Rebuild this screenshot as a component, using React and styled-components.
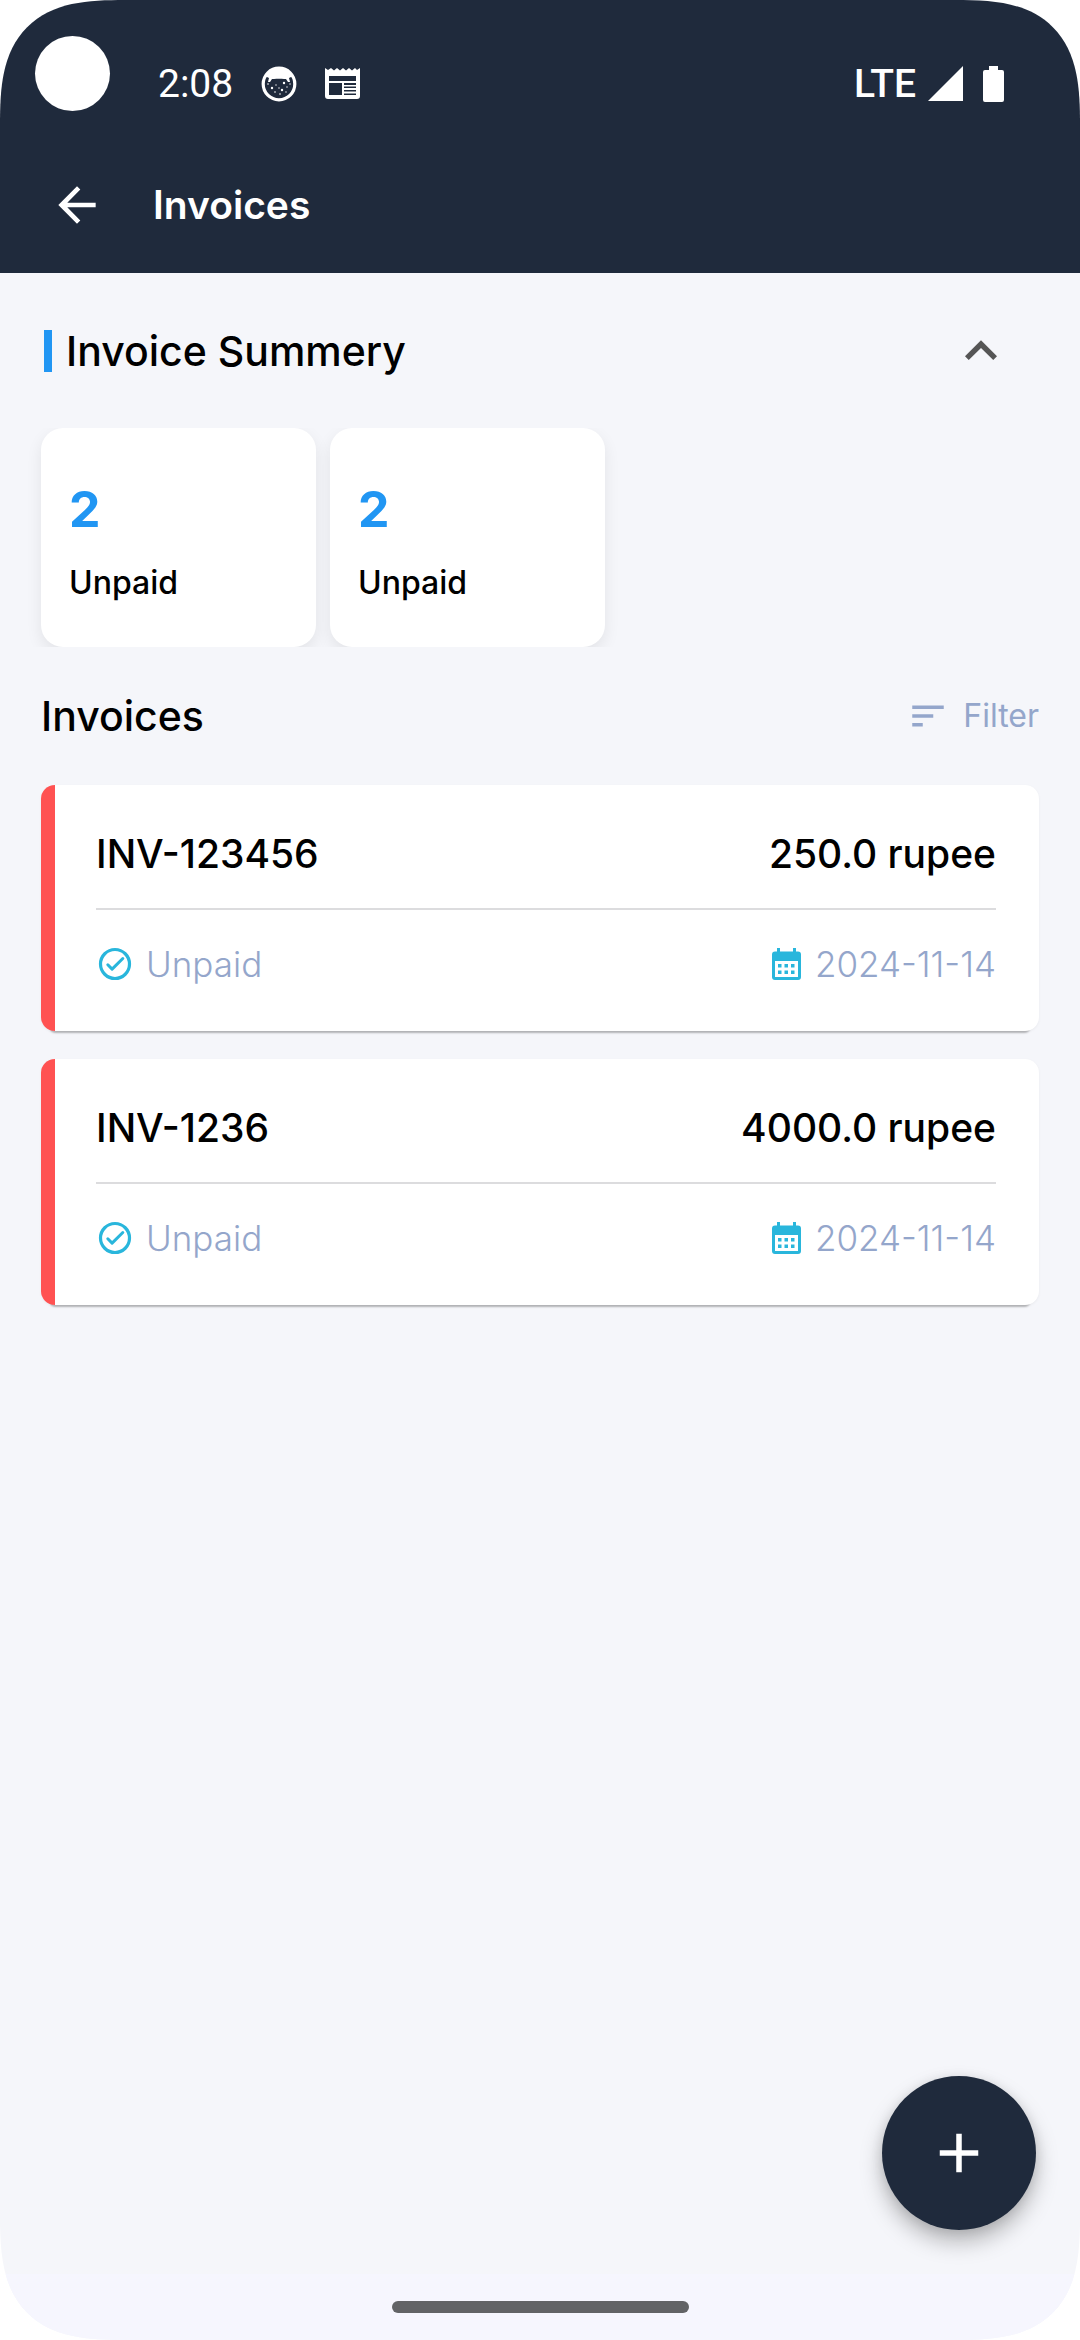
import React, { useState } from "react";
import styled, { createGlobalStyle } from "styled-components";
import {
  MdArrowBack,
  MdKeyboardArrowUp,
  MdKeyboardArrowDown,
  MdSort,
  MdAdd,
} from "react-icons/md";

const color = {
  navy: "#1f2a3c",
  page: "#f5f6fa",
  nav: "#f6f6fe",
  blue: "#2196f3",
  red: "#ff5252",
  cyan: "#29b6dc",
  muted: "#94a6cb",
  line: "#dcdcde",
};

const GlobalStyle = createGlobalStyle`
  *, *::before, *::after { box-sizing: border-box; }
  body {
    margin: 0;
    background: #fff;
    font-family: Inter, "Open Sans", sans-serif;
    color: #000;
  }
  h1, h2, p, ul { margin: 0; padding: 0; }
  ul { list-style: none; }
  svg { display: block; flex: none; }
  button {
    display: flex;
    align-items: center;
    justify-content: center;
    padding: 0;
    border: 0;
    background: none;
    color: inherit;
    font: inherit;
    cursor: pointer;
  }
`;

const Screen = styled.div`
  position: relative;
  display: flex;
  flex-direction: column;
  min-height: 100vh;
  overflow: hidden;
  background: ${color.page};
  border-radius: 96px;
  @supports (corner-shape: superellipse(1.5)) {
    border-radius: 125px;
    corner-shape: superellipse(1.5);
  }
`;

const TopArea = styled.header`
  background: ${color.navy};
  color: #fff;
`;

const StatusBar = styled.div`
  display: flex;
  align-items: center;
  justify-content: space-between;
  height: 136px;
  padding: 31px 76px 0 158px;
  font: 400 39px/48px Roboto, sans-serif;
`;

const StatusGroup = styled.div`
  display: flex;
  align-items: center;
  gap: ${(p) => p.$gap}px;
`;

const Network = styled.span`
  font-weight: 500;
`;

const Camera = styled.span`
  position: absolute;
  top: 36px;
  left: 35px;
  width: 75px;
  height: 75px;
  border-radius: 50%;
  background: #fff;
`;

const AppBar = styled.div`
  display: flex;
  align-items: center;
  gap: 48px;
  height: 137px;
  padding: 0 49px;
`;

const Title = styled.h1`
  font-size: 39px;
  line-height: 48px;
  font-weight: 600;
`;

const Main = styled.main`
  flex: 1;
  padding: 0 41px;
`;

const SummaryHeader = styled.div`
  display: flex;
  align-items: center;
  justify-content: space-between;
  height: 155px;
  padding-right: 26px;
`;

const SectionTitle = styled.h2`
  font-size: 41px;
  line-height: 48px;
  font-weight: 500;
`;

const SummaryTitle = styled(SectionTitle)`
  display: flex;
  align-items: center;
  gap: 14px;
  padding-left: 3px;
  &::before {
    content: "";
    width: 8px;
    height: 42px;
    background: ${color.blue};
  }
`;

const ToggleButton = styled.button`
  && { color: #555; }
`;

const Stats = styled.ul`
  display: flex;
  gap: 14px;
  clip-path: inset(0 -20px);
`;

const Stat = styled.li`
  display: flex;
  flex-direction: column;
  gap: 24px;
  width: 275px;
  padding: 49px 28px 46px;
  border-radius: 22px;
  background: #fff;
  box-shadow: 0 6px 16px rgba(0, 0, 0, 0.08);
`;

const StatValue = styled.strong`
  font-size: 50px;
  line-height: 64px;
  font-weight: 700;
  color: ${color.blue};
`;

const StatLabel = styled.span`
  font-size: 32px;
  line-height: 36px;
  font-weight: 500;
`;

const ListHeader = styled.div`
  display: flex;
  align-items: center;
  justify-content: space-between;
  height: 138px;
`;

const FilterButton = styled.button`
  && {
    gap: 14px;
    font-size: 32px;
    line-height: 36px;
    color: ${color.muted};
  }
`;

const InvoiceList = styled.ul`
  display: flex;
  flex-direction: column;
  gap: 28px;
`;

const InvoiceCard = styled.li`
  padding: 42px 43px 40px 41px;
  border-left: 14px solid ${color.red};
  border-radius: 14px;
  background: #fff;
  box-shadow: 0 11px 2px -9px rgba(0, 0, 0, 0.26), 0 1px 3px rgba(0, 0, 0, 0.05);
`;

const InvoiceRow = styled.div`
  display: flex;
  align-items: center;
  justify-content: space-between;
  font-size: 39px;
  line-height: 54px;
  font-weight: 500;
`;

const Divider = styled.hr`
  height: 2px;
  margin: 27px 0;
  border: 0;
  background: ${color.line};
`;

const Meta = styled.span`
  display: flex;
  align-items: center;
  gap: 12px;
  font-size: 35px;
  font-weight: 300;
  color: ${color.muted};
`;

const AddButton = styled.button`
  && {
    position: absolute;
    right: 44px;
    bottom: 110px;
    width: 154px;
    height: 154px;
    border-radius: 50%;
    background: ${color.navy};
    color: #fff;
    box-shadow: 0 12px 22px rgba(0, 0, 0, 0.26), 0 2px 12px rgba(0, 0, 0, 0.1);
  }
`;

const NavBar = styled.footer`
  display: flex;
  justify-content: center;
  height: 66px;
  padding-top: 27px;
  background: ${color.nav};
`;

const HomeHandle = styled.span`
  width: 297px;
  height: 12px;
  border-radius: 6px;
  background: #626366;
`;

const FaceIcon = () => (
  <svg width="36" height="36" viewBox="0 0 36 36" aria-hidden="true">
    <circle cx="18" cy="18" r="15.8" fill="none" stroke="#fff" strokeWidth="3.2" />
    <path
      d="M4 10C8 3 13 1.500 18 1.500S28 3 32 10L28 12l1 4h-2l-2-3h-2C20 12.500 16 12.500 13 13h-2l-2 3H7l1-4z"
      fill="#fff"
    />
    <g fill="#fff">
      <circle cx="11" cy="22" r="1.2" />
      <circle cx="21" cy="24" r="1.2" />
      <circle cx="23" cy="17" r="1.2" />
      <circle cx="15" cy="19" r=".7" />
      <circle cx="18" cy="22" r=".7" />
      <circle cx="26" cy="21" r=".7" />
      <circle cx="14" cy="26" r=".8" />
      <circle cx="19" cy="28" r=".8" />
      <circle cx="25" cy="26" r=".7" />
      <circle cx="7" cy="18" r=".8" />
      <circle cx="29" cy="18" r=".7" />
    </g>
  </svg>
);

const NewsIcon = () => (
  <svg width="35" height="31" viewBox="0 0 35 31" aria-hidden="true">
    <path
      fill="#fff"
      fillRule="evenodd"
      d="M0 0l3 2 3-2 3 2.500L12 0l3 2.500L18 0l3 2.500L24 0l3 2.500L30 0l2 2 3-2v28a3 3 0 0 1-3 3H3a3 3 0 0 1-3-3zM4 8v5h27V8zM4 15v12h13V15zM19 15v2h12v-2zM19 18.500v1.500h12v-1.500zM19 22v1.500h12V22zM19 25.500V27h12v-1.500z"
    />
  </svg>
);

const SignalIcon = () => (
  <svg width="35" height="35" viewBox="0 0 35 35" aria-hidden="true">
    <path d="M35 0v35H0z" fill="#fff" />
  </svg>
);

const BatteryIcon = () => (
  <svg width="21" height="36" viewBox="0 0 21 36" aria-hidden="true">
    <path d="M6 0h9v4h4a2 2 0 0 1 2 2v28a2 2 0 0 1-2 2H2a2 2 0 0 1-2-2V6a2 2 0 0 1 2-2h4z" fill="#fff" />
  </svg>
);

const CheckIcon = () => (
  <svg width="38" height="38" viewBox="0 0 38 38" fill="none" stroke={color.cyan} aria-hidden="true">
    <circle cx="19" cy="19" r="14.5" strokeWidth="3.2" />
    <path d="M11.800 19.800l4.300 4.300L26.800 13.500" strokeWidth="3" strokeLinecap="round" strokeLinejoin="round" />
  </svg>
);

const CalendarIcon = () => (
  <svg width="32" height="38" viewBox="-1 -3 32 38" fill={color.cyan} aria-hidden="true">
    <path
      fillRule="evenodd"
      d="M5 0h3v3.500h13V0h3v3.500h2a3 3 0 0 1 3 3V29a3 3 0 0 1-3 3H3a3 3 0 0 1-3-3V6.500a3 3 0 0 1 3-3h2zM3 13v16h23V13z"
    />
    <path d="M6 16h3.500v3.500H6zM12.500 16H16v3.500h-3.500zM19 16h3.500v3.500H19zM6 22.500h3.500V26H6zM12.500 22.500H16V26h-3.500zM19 22.500h3.500V26H19z" />
  </svg>
);

const stats = [
  { id: 1, value: 2, label: "Unpaid" },
  { id: 2, value: 2, label: "Unpaid" },
];

const invoices = [
  { number: "INV-123456", amount: "250.0 rupee", status: "Unpaid", date: "2024-11-14" },
  { number: "INV-1236", amount: "4000.0 rupee", status: "Unpaid", date: "2024-11-14" },
];

function Invoice({ number, amount, status, date }) {
  return (
    <InvoiceCard>
      <InvoiceRow>
        <span>{number}</span>
        <span>{amount}</span>
      </InvoiceRow>
      <Divider />
      <InvoiceRow>
        <Meta>
          <CheckIcon />
          {status}
        </Meta>
        <Meta>
          <CalendarIcon />
          <time dateTime={date}>{date}</time>
        </Meta>
      </InvoiceRow>
    </InvoiceCard>
  );
}

export default function App() {
  const [open, setOpen] = useState(true);
  return (
    <>
      <GlobalStyle />
      <Screen>
        <TopArea>
          <StatusBar>
            <Camera />
            <StatusGroup $gap={28}>
              <span>2:08</span>
              <FaceIcon />
              <NewsIcon />
            </StatusGroup>
            <StatusGroup $gap={20}>
              <StatusGroup $gap={12}>
                <Network>LTE</Network>
                <SignalIcon />
              </StatusGroup>
              <BatteryIcon />
            </StatusGroup>
          </StatusBar>
          <AppBar>
            <button type="button" aria-label="Back">
              <MdArrowBack size={56} />
            </button>
            <Title>Invoices</Title>
          </AppBar>
        </TopArea>

        <Main>
          <SummaryHeader>
            <SummaryTitle>Invoice Summery</SummaryTitle>
            <ToggleButton
              type="button"
              aria-label="Toggle summary"
              aria-expanded={open}
              onClick={() => setOpen(!open)}
            >
              {open ? <MdKeyboardArrowUp size={64} /> : <MdKeyboardArrowDown size={64} />}
            </ToggleButton>
          </SummaryHeader>
          {open && (
            <Stats>
              {stats.map((s) => (
                <Stat key={s.id}>
                  <StatValue>{s.value}</StatValue>
                  <StatLabel>{s.label}</StatLabel>
                </Stat>
              ))}
            </Stats>
          )}

          <ListHeader>
            <SectionTitle>Invoices</SectionTitle>
            <FilterButton type="button">
              <MdSort size={42} />
              Filter
            </FilterButton>
          </ListHeader>
          <InvoiceList>
            {invoices.map((invoice) => (
              <Invoice key={invoice.number} {...invoice} />
            ))}
          </InvoiceList>
        </Main>

        <AddButton type="button" aria-label="Add invoice">
          <MdAdd size={66} />
        </AddButton>
        <NavBar>
          <HomeHandle />
        </NavBar>
      </Screen>
    </>
  );
}
